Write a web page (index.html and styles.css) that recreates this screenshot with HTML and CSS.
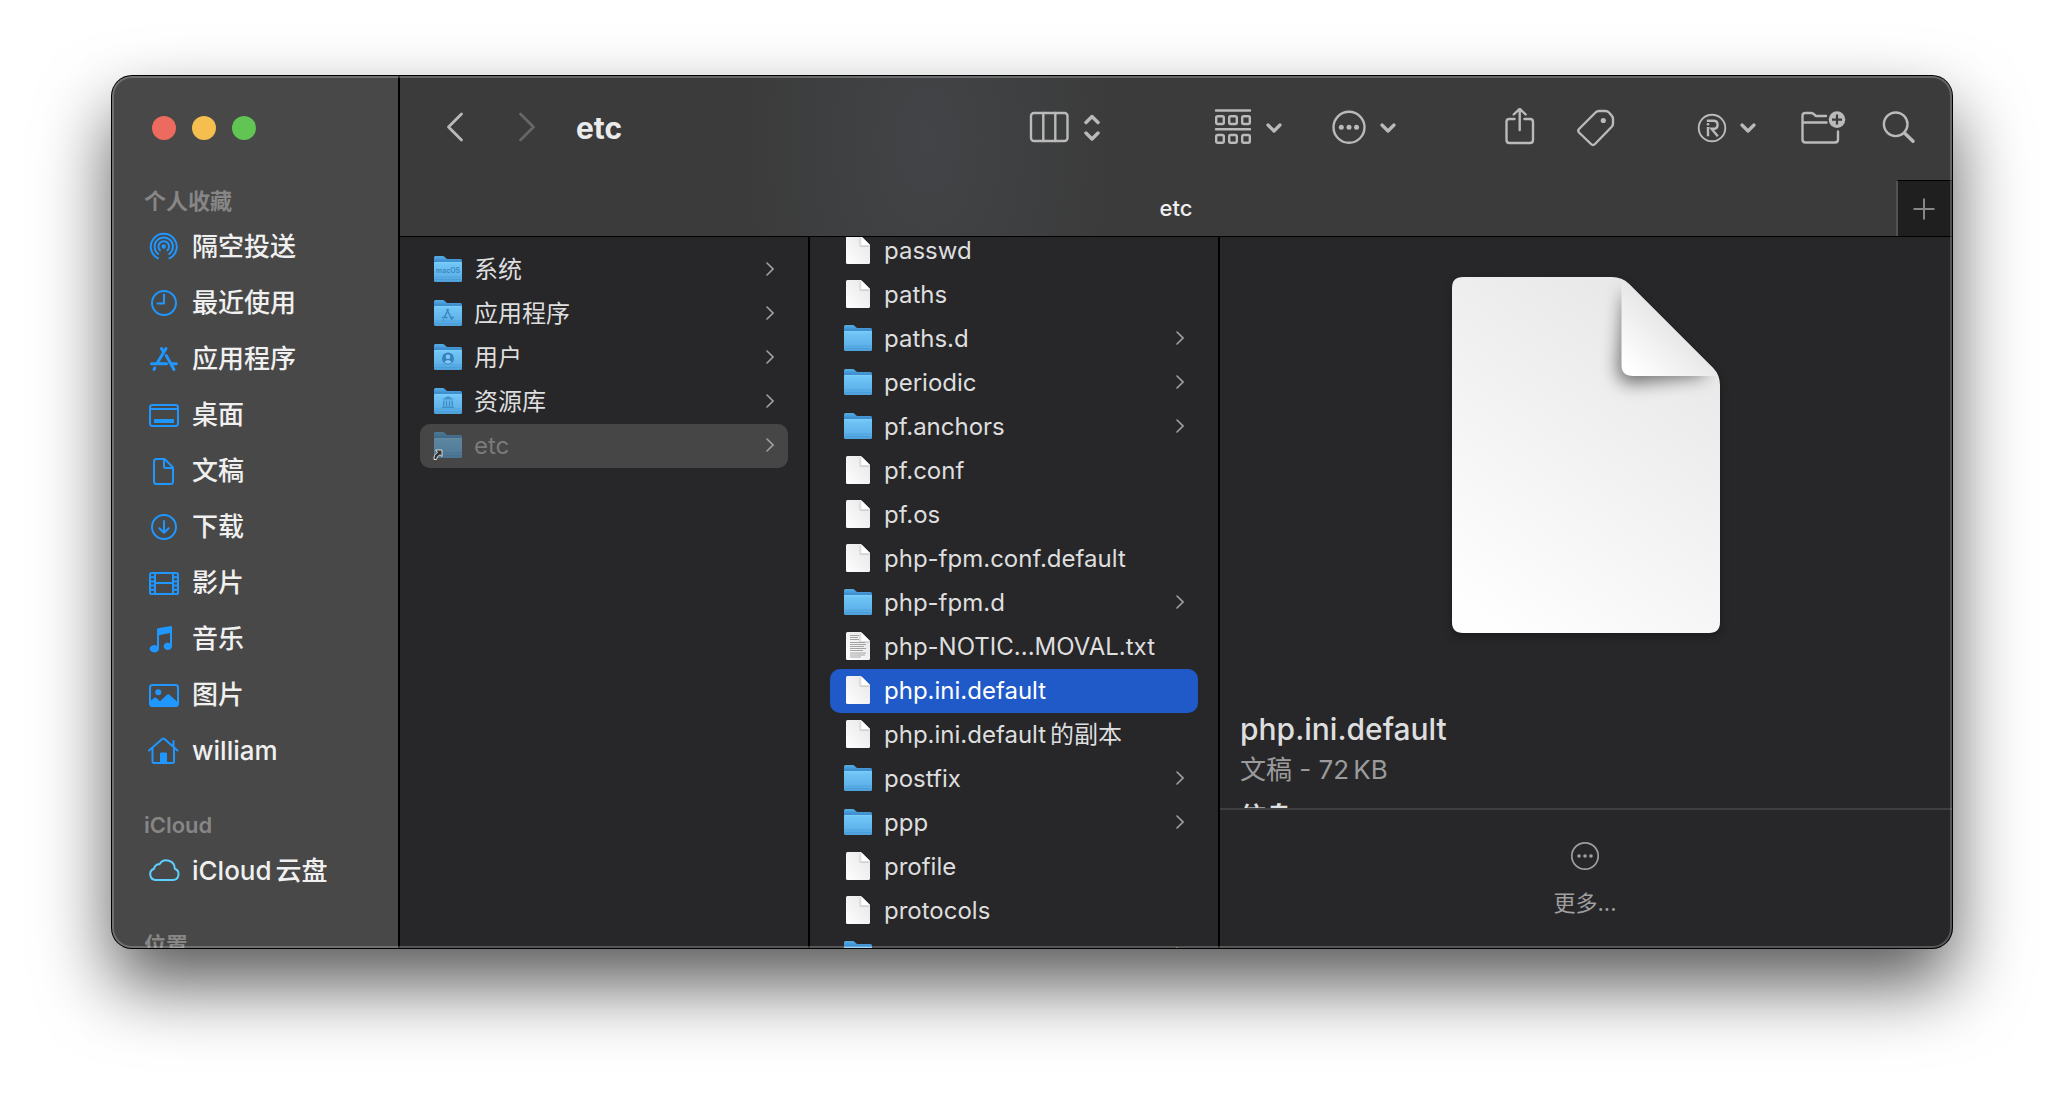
FILE: index.html
```html
<!DOCTYPE html>
<html lang="zh-CN">
<head>
<meta charset="utf-8">
<title>etc</title>
<meta name="viewport" content="width=device-width, initial-scale=1">
<link rel="stylesheet" href="styles.css">
</head>
<body>
<svg class="defs" width="0" height="0" aria-hidden="true">
  <defs>
    <linearGradient id="folder-back" x1="0" y1="0" x2="0" y2="1">
      <stop offset="0" stop-color="#56aee6"/><stop offset=".25" stop-color="#3f8fd0"/><stop offset="1" stop-color="#3f8fd0"/>
    </linearGradient>
    <linearGradient id="folder-front" x1="0" y1="0" x2="0" y2="1">
      <stop offset="0" stop-color="#7fd0f9"/><stop offset=".1" stop-color="#70c5f6"/><stop offset=".75" stop-color="#5db1ea"/><stop offset="1" stop-color="#4c9fd8"/>
    </linearGradient>
    <linearGradient id="paper" x1="1" y1="0.1" x2="0" y2="1">
      <stop offset="0" stop-color="#e6e6e6"/><stop offset="1" stop-color="#ffffff"/>
    </linearGradient>
    <symbol id="folder" viewBox="0 0 28 28">
      <path d="M0 2.5Q0 1 1.5 1H8.500Q9.800 1 10.800 2L11.500 2.700Q12.500 4 14 4H26.500Q28 4 28 5.500V20H0Z" fill="url(#folder-back)"/>
      <path d="M0 7.500Q0 7 1 7H27Q28 7 28 7.500V25.500Q28 27 26.500 27H1.500Q0 27 0 25.500Z" fill="url(#folder-front)"/>
      <path d="M.500 22H27.500M.500 24.500H27.500" stroke="#3f8fcb" stroke-width=".7" opacity=".6"/>
    </symbol>
    <symbol id="file" viewBox="0 0 28 28">
      <path d="M2 1.500Q2 0 3.500 0H17L26 9V26.500Q26 28 24.500 28H3.500Q2 28 2 26.500Z" fill="url(#paper)"/>
      <path d="M16.500 1V9.500H26L24 11H17Q15.500 11 15.500 9.500V2Z" fill="#bdbdbd" opacity=".6"/>
      <path d="M17.500 .5L26 9H18.500Q17.500 9 17.500 8Z" fill="#fff"/>
    </symbol>
    <symbol id="chevron" viewBox="0 0 8 14">
      <path d="M1 1L7 7L1 13" fill="none" stroke="#a0a0a1" stroke-width="1.600" stroke-linecap="round"/>
    </symbol>
    <symbol id="down" viewBox="0 0 16 40">
      <path d="M2 17L8 23L14 17" fill="none" stroke="currentColor" stroke-width="3.200" stroke-linecap="round" stroke-linejoin="round"/>
    </symbol>
  </defs>
</svg>

<main class="window">
  <aside class="sidebar">
    <div class="lights">
      <button class="light light-close" aria-label="关闭"></button>
      <button class="light light-min" aria-label="最小化"></button>
      <button class="light light-zoom" aria-label="缩放"></button>
    </div>
    <nav>
      <h2 class="group">个人收藏</h2>
      <a class="place" href="#"><svg class="place-icon" viewBox="0 0 32 32"><g class="line"><path d="M10 27.300A13 13 0 1 1 21.500 27.300"/><path d="M10.300 23A9.200 9.200 0 1 1 21.200 23"/><path d="M12 19.200A5.300 5.300 0 1 1 19.500 19.200"/></g><circle cx="15.700" cy="15.500" r="2.200" fill="currentColor"/></svg>隔空投送</a>
      <a class="place" href="#"><svg class="place-icon" viewBox="0 0 32 32"><g class="line"><circle cx="16" cy="16" r="12"/><path d="M16 7.500V16.500H9.500"/></g></svg>最近使用</a>
      <a class="place" href="#"><svg class="place-icon" viewBox="0 0 32 32"><g class="line thick"><path d="M18 5.500L9 20.500M13.500 5.500L15 8M3.500 20.700H18.500M24.500 20.700H28.300M18.200 12.500L26 26.500M6.800 25L6 26.500"/></g></svg>应用程序</a>
      <a class="place" href="#"><svg class="place-icon" viewBox="0 0 32 32"><g class="line"><rect x="2" y="6" width="28" height="21" rx="2.500"/><path d="M2 10H30"/></g><rect x="6" y="20" width="20" height="4" rx=".5" fill="currentColor"/></svg>桌面</a>
      <a class="place" href="#"><svg class="place-icon" viewBox="0 0 32 32"><g class="line"><path d="M16.500 4H8.500Q6 4 6 6.500V26.500Q6 29 8.500 29H22.500Q25 29 25 26.500V12.500L16.500 4Q16 4 16 5V11.500Q16 13 17.500 13H25"/></g></svg>文稿</a>
      <a class="place" href="#"><svg class="place-icon" viewBox="0 0 32 32"><g class="line"><circle cx="16" cy="16" r="12"/><path d="M16 10V21.500M11.300 17.200L16 21.700L20.700 17.200"/></g></svg>下载</a>
      <a class="place" href="#"><svg class="place-icon" viewBox="0 0 32 32"><g class="line"><rect x="2" y="6" width="28" height="21" rx="1.500"/><path d="M7 6V27M25 6V27M7 16H25"/><path d="M2 10.200H7M2 14.400H7M2 18.600H7M2 22.800H7M25 10.200H30M25 14.400H30M25 18.600H30M25 22.800H30"/></g></svg>影片</a>
      <a class="place" href="#"><svg class="place-icon" viewBox="0 0 32 32" fill="currentColor"><path d="M9 6.500Q9 5.500 10 5.200L23 3Q24 3 24 4V23.500A4.200 3.700 0 1 1 22 20.200V10L11 12.300V26A4.700 3.700 0 1 1 9 22.700Z"/></svg>音乐</a>
      <a class="place" href="#"><svg class="place-icon" viewBox="0 0 32 32"><g class="line"><rect x="2" y="6" width="28" height="21" rx="2.500"/></g><g fill="currentColor"><circle cx="10.300" cy="13.300" r="3"/><path d="M2 22.500L6.300 18.800Q7.300 18 8.300 18.800L12 22.200L19 15.800Q20.300 14.800 21.500 15.800L30 23.500V26Q30 27.500 28 27.500H4Q2 27.500 2 26Z"/></g></svg>图片</a>
      <a class="place" href="#"><svg class="place-icon" viewBox="0 0 32 32"><g class="line"><path d="M1 15.500L14.500 3.800Q15.300 3.200 16.200 3.800L29.500 15.500M4.500 13V26.500Q4.500 28 6 28H24.500Q26 28 26 26.500V13M25.500 6V11.500"/></g><path d="M12 18.500Q12 17.500 13 17.500H18Q19 17.500 19 18.500V28H12Z" fill="currentColor"/></svg>william</a>

      <h2 class="group">iCloud</h2>
      <a class="place" href="#"><svg class="place-icon cloud" viewBox="0 0 32 32"><g class="line"><path d="M7.500 25H25A5.800 5.800 0 0 0 26.800 13.800A8.300 8.300 0 0 0 11.500 9.300A5 5 0 0 0 6 13.800A5.800 5.800 0 0 0 7.500 25Z"/></g></svg><span>iCloud<span class="cjk">云盘</span></span></a>

      <h2 class="group">位置</h2>
    </nav>
  </aside>

  <section class="browser">
    <header class="chrome">
      <div class="toolbar">
        <button class="tool back" aria-label="后退"><svg width="18" height="40" viewBox="0 0 18 40"><path d="M15.500 6L2.500 19L15.500 32" class="stroke arrow"/></svg></button>
        <button class="tool forward" aria-label="前进" disabled><svg width="18" height="40" viewBox="0 0 18 40"><path d="M2.500 6L15.500 19L2.500 32" class="stroke arrow"/></svg></button>
        <h1 class="title">etc</h1>

        <button class="tool view" aria-label="显示方式">
          <svg width="40" height="40" viewBox="0 0 40 40"><g class="stroke"><rect x="2" y="5" width="36.500" height="28" rx="3"/><path d="M14.300 5V33M26.300 5V33"/></g></svg>
          <svg width="16" height="40" viewBox="0 0 16 40"><path class="stroke heavy" d="M2 14.500L8 8.500L14 14.500M2 25L8 31L14 25"/></svg>
        </button>
        <button class="tool arrange" aria-label="分组">
          <svg width="38" height="40" viewBox="0 0 38 40"><g class="stroke"><path d="M2 2.500H36M2 21.300H36"/><rect x="2.200" y="8.200" width="7.600" height="7.800" rx="1.500"/><rect x="15.200" y="8.200" width="7.600" height="7.800" rx="1.500"/><rect x="28.200" y="8.200" width="7.600" height="7.800" rx="1.500"/><rect x="2.200" y="27" width="7.600" height="7.800" rx="1.500"/><rect x="15.200" y="27" width="7.600" height="7.800" rx="1.500"/><rect x="28.200" y="27" width="7.600" height="7.800" rx="1.500"/></g></svg>
          <svg width="16" height="40"><use href="#down"/></svg>
        </button>
        <button class="tool more" aria-label="操作">
          <svg width="36" height="40" viewBox="0 0 36 40"><circle cx="17" cy="19.300" r="15.500" class="stroke"/><g fill="currentColor"><circle cx="9.300" cy="19.300" r="2.500"/><circle cx="17" cy="19.300" r="2.500"/><circle cx="24.500" cy="19.300" r="2.500"/></g></svg>
          <svg width="16" height="40"><use href="#down"/></svg>
        </button>
        <button class="tool share" aria-label="共享"><svg width="32" height="40" viewBox="0 0 32 40"><path class="stroke" d="M10.500 11H5.500Q2.500 11 2.500 14V32Q2.500 35 5.500 35H26Q29 35 29 32V14Q29 11 26 11H20.500M15.700 22V1M9.700 6.500L15.700 .800L21.700 6.500"/></svg></button>
        <button class="tool tag" aria-label="标签"><svg width="40" height="40" viewBox="0 0 40 40"><path class="stroke" d="M3 21L19.500 4.500Q21 3 23 3H29.500Q31.500 3 33 4.500L36 8Q37 9.500 37 11V15.500Q37 17.500 35.500 19L19 36Q17 38 15 36L3 24.500Q1.500 22.700 3 21Z"/><circle cx="27.300" cy="12.500" r="2.600" fill="currentColor"/></svg></button>
        <button class="tool mark" aria-label="扩展">
          <svg width="32" height="40" viewBox="0 0 32 40"><g fill="none" stroke="currentColor"><circle cx="16" cy="20" r="13.300" stroke-width="1.900"/><path stroke-width="2.400" d="M10.800 12.800H17.500Q21.600 12.800 21.600 16.800Q21.600 20.800 17.500 20.800H15.500L21.800 28.300M12 19V28.300"/></g><circle cx="12" cy="16.300" r="1.300" fill="currentColor"/></svg>
          <svg width="16" height="40"><use href="#down"/></svg>
        </button>
        <button class="tool newdir" aria-label="新建文件夹"><svg width="46" height="40" viewBox="0 0 46 40"><path class="stroke" d="M26 8H16L13 5.500Q12 5 11 5H5.500Q2.500 5 2.500 8V31.500Q2.500 34.500 5.500 34.500H35Q38 34.500 38 31.500V23.500M2.500 14.500H26.500"/><circle cx="37" cy="11.600" r="8.300" fill="currentColor"/><path d="M37 6.600V16.600M32 11.600H42" stroke="#3b3b3b" stroke-width="2.200"/></svg></button>
        <button class="tool search" aria-label="搜索"><svg width="34" height="40" viewBox="0 0 34 40"><circle cx="13.700" cy="16.300" r="11.800" class="stroke"/><path class="stroke heavy" d="M22.500 25L31 33.300"/></svg></button>
      </div>
      <div class="tabs">
        <button class="tab">etc</button>
        <button class="tab-add" aria-label="新建标签页"><svg width="22" height="22" viewBox="0 0 22 22"><path d="M11 .500V21.500M.500 11H21.500" stroke="#868686" stroke-width="2"/></svg></button>
      </div>
    </header>

    <div class="columns">
      <ul class="column root">
        <li><a class="entry" href="#"><svg class="icon"><use href="#folder"/><text x="14" y="18" class="folder-word">macOS</text></svg><span class="name">系统</span><svg class="go"><use href="#chevron"/></svg></a></li>
        <li><a class="entry" href="#"><svg class="icon"><use href="#folder"/><path d="M14.500 10L10 19M12.800 10L18 21M8 18.500H13.500M17.500 18.500H20M9.500 20.500L9 21.500" fill="none" stroke="#3b86bf" stroke-width="1.500"/></svg><span class="name">应用程序</span><svg class="go"><use href="#chevron"/></svg></a></li>
        <li><a class="entry" href="#"><svg class="icon"><use href="#folder"/><circle cx="14" cy="15.500" r="6" fill="#3a80bd"/><circle cx="14" cy="13.800" r="2.300" fill="#79caf7"/><path d="M10.300 19.300Q14 14.500 17.700 19.300Q14 22 10.300 19.300Z" fill="#79caf7"/></svg><span class="name">用户</span><svg class="go"><use href="#chevron"/></svg></a></li>
        <li><a class="entry" href="#"><svg class="icon"><use href="#folder"/><path d="M14 9L20 12.500H8ZM9 13.500H10.500V19H9ZM11.800 13.500H13.200V19H11.800ZM14.800 13.500H16.200V19H14.800ZM17.500 13.500H19V19H17.500ZM8 19.500H20V21H8Z" fill="#3b86bf" opacity=".8"/></svg><span class="name">资源库</span><svg class="go"><use href="#chevron"/></svg></a></li>
        <li><a class="entry current" href="#"><svg class="icon"><g opacity=".5"><use href="#folder"/></g><path d="M0 28.500Q-.500 23.500 3.500 21.500L1.500 19H8V25.500L6 23.800Q3 25 2.500 28.500Z" fill="#333" stroke="#ddd" stroke-width="1"/></svg><span class="name">etc</span><svg class="go"><use href="#chevron"/></svg></a></li>
      </ul>

      <ul class="column listing">
        <li><a class="entry" href="#"><svg class="icon"><use href="#file"/></svg><span class="name">passwd</span></a></li>
        <li><a class="entry" href="#"><svg class="icon"><use href="#file"/></svg><span class="name">paths</span></a></li>
        <li><a class="entry" href="#"><svg class="icon"><use href="#folder"/></svg><span class="name">paths.d</span><svg class="go"><use href="#chevron"/></svg></a></li>
        <li><a class="entry" href="#"><svg class="icon"><use href="#folder"/></svg><span class="name">periodic</span><svg class="go"><use href="#chevron"/></svg></a></li>
        <li><a class="entry" href="#"><svg class="icon"><use href="#folder"/></svg><span class="name">pf.anchors</span><svg class="go"><use href="#chevron"/></svg></a></li>
        <li><a class="entry" href="#"><svg class="icon"><use href="#file"/></svg><span class="name">pf.conf</span></a></li>
        <li><a class="entry" href="#"><svg class="icon"><use href="#file"/></svg><span class="name">pf.os</span></a></li>
        <li><a class="entry" href="#"><svg class="icon"><use href="#file"/></svg><span class="name">php-fpm.conf.default</span></a></li>
        <li><a class="entry" href="#"><svg class="icon"><use href="#folder"/></svg><span class="name">php-fpm.d</span><svg class="go"><use href="#chevron"/></svg></a></li>
        <li><a class="entry" href="#"><svg class="icon"><use href="#file"/><path d="M6 3.500H15M6 5.500H14M6 7.500H15M6 10.500H21M6 12.500H22M6 14.500H20M6 16.500H22M6 18.500H19M6 21H22M6 23H21M6 25H17" stroke="#9a9a9a" stroke-width=".9"/></svg><span class="name">php-NOTIC...MOVAL.txt</span></a></li>
        <li><a class="entry selected" href="#"><svg class="icon"><use href="#file"/></svg><span class="name">php.ini.default</span></a></li>
        <li><a class="entry" href="#"><svg class="icon"><use href="#file"/></svg><span class="name">php.ini.default<span class="cjk">的副本</span></span></a></li>
        <li><a class="entry" href="#"><svg class="icon"><use href="#folder"/></svg><span class="name">postfix</span><svg class="go"><use href="#chevron"/></svg></a></li>
        <li><a class="entry" href="#"><svg class="icon"><use href="#folder"/></svg><span class="name">ppp</span><svg class="go"><use href="#chevron"/></svg></a></li>
        <li><a class="entry" href="#"><svg class="icon"><use href="#file"/></svg><span class="name">profile</span></a></li>
        <li><a class="entry" href="#"><svg class="icon"><use href="#file"/></svg><span class="name">protocols</span></a></li>
        <li><a class="entry" href="#"><svg class="icon"><use href="#folder"/></svg><span class="name"></span><svg class="go"><use href="#chevron"/></svg></a></li>
      </ul>

      <section class="preview">
        <div class="preview-body">
          <svg class="page" viewBox="0 0 268 356">
            <defs>
              <linearGradient id="sheet" x1="234" y1="50" x2="30" y2="340" gradientUnits="userSpaceOnUse"><stop offset="0" stop-color="#e8e8e8"/><stop offset="1" stop-color="#fefefe"/></linearGradient>
              <linearGradient id="fold" x1="218" y1="50" x2="178" y2="92" gradientUnits="userSpaceOnUse"><stop offset="0" stop-color="#e8e8e8"/><stop offset="1" stop-color="#fff"/></linearGradient>
              <filter id="soft" x="-50%" y="-50%" width="200%" height="200%"><feGaussianBlur stdDeviation="9"/></filter>
              <clipPath id="sheet-clip"><path d="M0 11Q0 0 11 0H160Q170 0 177 7L261 91Q268 98 268 108V345Q268 356 257 356H11Q0 356 0 345Z"/></clipPath>
            </defs>
            <path d="M0 11Q0 0 11 0H160Q170 0 177 7L261 91Q268 98 268 108V345Q268 356 257 356H11Q0 356 0 345Z" fill="url(#sheet)"/>
            <g clip-path="url(#sheet-clip)"><path d="M173 14L166 92Q166 106 180 106L254 98L250 82Z" fill="#000" opacity=".55" filter="url(#soft)"/></g>
            <path d="M169.500 2Q174 4 177 7L261 91Q264 94 266 99H181Q169.500 99 169.500 88Z" fill="url(#fold)"/>
          </svg>
          <h2 class="file-name">php.ini.default</h2>
          <p class="file-kind">文稿 - 72<span class="unit">KB</span></p>
          <h3 class="info">信息</h3>
        </div>
        <div class="actions">
          <button class="action"><svg width="30" height="30" viewBox="0 0 30 30"><circle cx="15" cy="15" r="13.200" fill="none" stroke="currentColor" stroke-width="1.700"/><g fill="currentColor"><circle cx="9" cy="15" r="1.800"/><circle cx="15" cy="15" r="1.800"/><circle cx="21" cy="15" r="1.800"/></g></svg>更多...</button>
        </div>
      </section>
    </div>
  </section>
</main>
</body>
</html>
```
FILE: styles.css
```css
* { box-sizing: border-box; }

body {
  margin: 0;
  height: 100vh;
  padding: 76px 112px 148px;
  background: #fff;
  color: #dededf;
  font: 24px/32px Inter, "Noto Sans CJK SC", sans-serif;
  overflow: hidden;
}

button {
  padding: 0;
  border: 0;
  background: none;
  color: inherit;
  font: inherit;
}

a { color: inherit; text-decoration: none; }
h1, h2, h3, p, ul { margin: 0; padding: 0; }
ul { list-style: none; }
svg { display: block; flex: none; }
.defs { position: absolute; }
.cjk { margin-left: 4px; }

/* window frame */
.window {
  position: relative;
  display: flex;
  height: 100%;
  border-radius: 20px;
  overflow: hidden;
  background: #272729;
  box-shadow: 0 0 0 1px #000, 0 36px 72px rgba(0, 0, 0, .66);
}

.window::after {
  content: "";
  position: absolute;
  inset: 0;
  border-radius: inherit;
  box-shadow: inset 0 0 0 2px rgba(255, 255, 255, .22);
  pointer-events: none;
}

/* sidebar */
.sidebar {
  flex: none;
  width: 288px;
  border-right: 2px solid #000;
  background: #484848;
  overflow: hidden;
}

.lights {
  display: flex;
  align-items: center;
  gap: 16px;
  height: 104px;
  padding-left: 40px;
}

.light { width: 24px; height: 24px; border-radius: 50%; }
.light-close { background: #ed6a5e; }
.light-min { background: #f5bf4f; }
.light-zoom { background: #61c554; }

.group {
  margin-top: 25px;
  padding: 3px 0 0 32px;
  color: #868686;
  font-size: 22px;
  font-weight: 600;
  line-height: 36px;
}

.group:first-child { margin-top: 0; }

.place {
  display: flex;
  align-items: center;
  gap: 12px;
  height: 56px;
  padding-left: 36px;
  color: #f0f0f0;
  font-size: 26px;
  font-weight: 500;
}

.place-icon { width: 32px; height: 32px; color: #2096ff; }
.cloud { color: #5ecfff; }

.line {
  fill: none;
  stroke: currentColor;
  stroke-width: 2;
  stroke-linecap: round;
  stroke-linejoin: round;
}

.thick { stroke-width: 3; }

/* toolbar and tabs */
.browser {
  display: flex;
  flex: 1;
  flex-direction: column;
  min-width: 0;
}

.chrome {
  flex: none;
  border-bottom: 1px solid #000;
  background: radial-gradient(ellipse 190px 320px at 34% 40%, #424447, #3b3b3b) #3b3b3b;
}

.toolbar {
  display: flex;
  align-items: center;
  height: 104px;
  padding: 0 36px 0 46px;
}

.tool { display: flex; align-items: center; gap: 12px; color: #bababa; }
.forward { margin-left: 54px; color: #666; }

.stroke {
  fill: none;
  stroke: currentColor;
  stroke-width: 2.4;
  stroke-linecap: round;
  stroke-linejoin: round;
}

.arrow { stroke-width: 2.8; }
.heavy { stroke-width: 3.4; }

.title {
  margin-left: 40px;
  color: #ebebeb;
  font-size: 30px;
  font-weight: 700;
}

.view { gap: 15px; margin-left: auto; }
.arrange { gap: 14px; margin-left: 114px; }
.more { margin-left: 50px; }
.share { margin-left: 108px; }
.tag { margin-left: 40px; }
.mark { margin-left: 80px; }
.newdir { margin-left: 44px; }
.search { margin-left: 36px; }

.tabs { display: flex; height: 56px; }

.tab {
  flex: 1;
  padding-left: 56px;
  color: #efefef;
  font-size: 22px;
  font-weight: 500;
}

.tab-add {
  display: flex;
  align-items: center;
  justify-content: center;
  width: 56px;
  padding-right: 2px;
  border-top: 1px solid #000;
  border-left: 2px solid #525252;
  background: #1f1f1f;
}

/* columns */
.columns { display: flex; flex: 1; min-height: 0; }

.column {
  flex: none;
  width: 410px;
  padding: 11px 20px 0;
  border-right: 2px solid #000;
  overflow: hidden;
}

.listing { padding-top: 0; }
.listing li:first-child { margin-top: -8px; }

.entry {
  display: flex;
  align-items: center;
  gap: 12px;
  height: 44px;
  padding: 0 14px 2px;
  border-radius: 10px;
}

.icon { width: 28px; height: 28px; overflow: visible; }
.name { flex: 1; padding-top: 2px; white-space: nowrap; }
.go { width: 8px; height: 14px; }
.selected { background: #1f5ac8; color: #fff; }
.current { background: #464646; color: #7a7a7a; }

.folder-word {
  fill: #3b86bf;
  font-size: 7px;
  font-weight: 600;
  text-anchor: middle;
}

/* preview */
.preview {
  display: flex;
  flex: 1;
  flex-direction: column;
  min-width: 0;
}

.preview-body {
  flex: 1;
  min-height: 0;
  padding: 40px 20px 0;
  overflow: hidden;
}

.page {
  width: 268px;
  height: 356px;
  margin: 0 auto 76px;
  overflow: visible;
  filter: drop-shadow(0 4px 4px rgba(0, 0, 0, .3));
}

.file-name { font-size: 30px; font-weight: 500; line-height: 40px; }

.file-kind {
  padding-top: 1px;
  color: #9b9b9c;
  font-size: 26px;
  line-height: 40px;
}

.unit { margin-left: 4px; }

.info {
  margin-top: 11px;
  font-size: 26px;
  font-weight: 700;
  line-height: 32px;
}

.actions {
  display: flex;
  flex: none;
  align-items: center;
  justify-content: center;
  height: 140px;
  padding: 2px 2px 0 0;
  border-top: 2px solid #3f3f41;
}

.action {
  display: flex;
  flex-direction: column;
  align-items: center;
  gap: 16px;
  color: #9f9fa0;
  font-size: 22px;
}
```
